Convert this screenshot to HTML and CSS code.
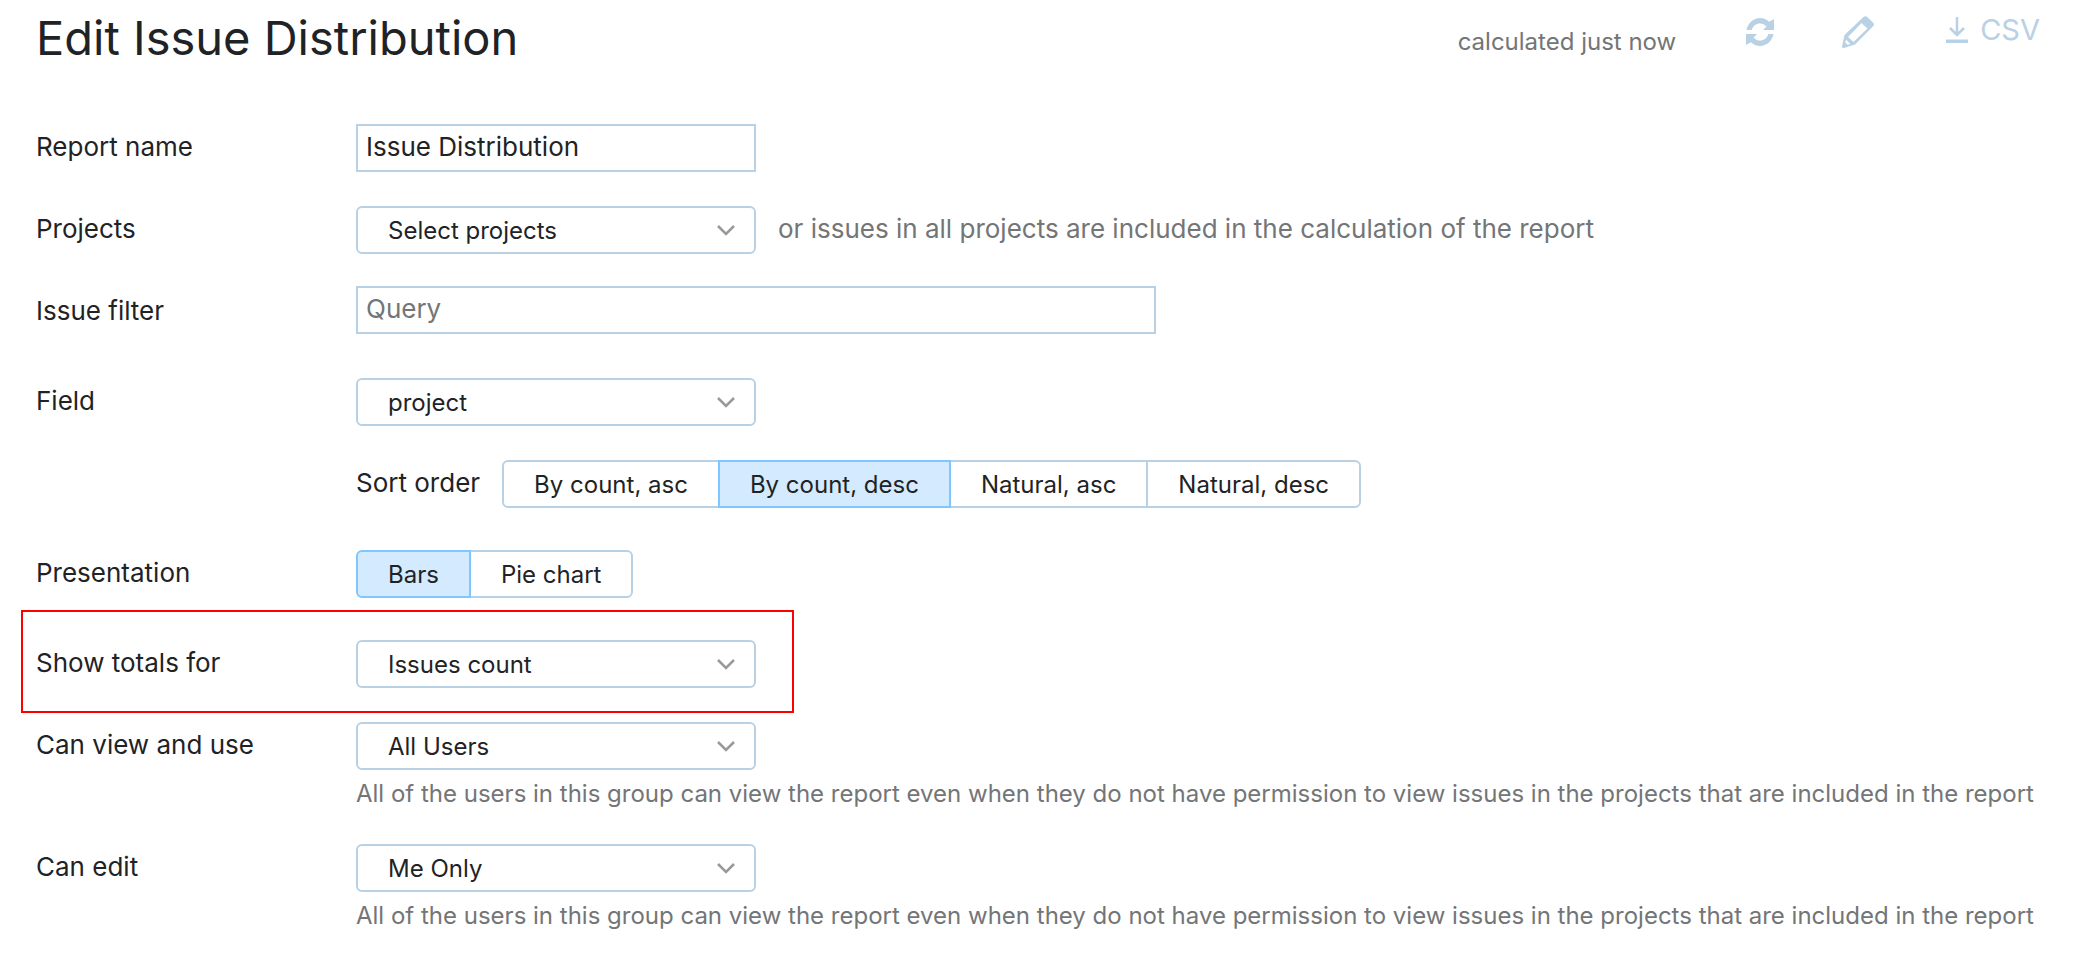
FILE: index.html
```html
<!DOCTYPE html>
<html lang="en">
<head>
<meta charset="utf-8">
<title>Edit Issue Distribution</title>
<link rel="stylesheet" href="styles.css">
</head>
<body>
<main class="report">
  <header class="report-header">
    <h1 class="report-title">Edit Issue Distribution</h1>
    <div class="toolbar">
      <span class="status">calculated just now</span>
      <button class="tool" type="button" aria-label="Refresh">
        <svg class="icon icon-refresh" viewBox="0 0 28 28" aria-hidden="true"><path fill="currentColor" d="M0.500 12C1.800 5 7.300 0 14 0c3.600 0 6.800 1.400 9.200 3.800L28 1v11H17l3.500-3.500C18.700 6.500 16.500 5.400 14 5.400c-4 0-7.200 2.700-8.300 6.600zM27.500 16C26.200 23 20.700 28 14 28c-3.600 0-6.800-1.400-9.200-3.800L0 27V16h11l-3.500 3.500c1.800 2 4 3.100 6.500 3.100 4 0 7.200-2.700 8.300-6.600z"/></svg>
      </button>
      <button class="tool" type="button" aria-label="Edit">
        <svg class="icon icon-pencil" viewBox="0 0 32 32" aria-hidden="true"><path fill="currentColor" fill-rule="evenodd" d="M21.500 1q1.500-1.500 3.200-0.400l6.300 6q1.600 1.600 0.400 3.400L13 28.500 2 32q-2 0.300-2-1.500L2.500 19zM19.500 7L6 21l5.500 5L25.500 12.500zM4 23.500l-0.800 3 2.500 2.300 2.800-0.900z"/></svg>
      </button>
      <button class="tool tool-csv" type="button">
        <svg class="icon icon-download" viewBox="0 0 22 26" aria-hidden="true"><path fill="none" stroke="currentColor" stroke-width="2.500" d="M11 0v17M4 11l7 7 7-7"/><path fill="currentColor" d="M0 22.500h22V26H0z"/></svg>
        CSV
      </button>
    </div>
  </header>

  <form class="form">
    <div class="row">
      <label class="label" for="name">Report name</label>
      <div class="controls"><input class="input" id="name" type="text" value="Issue Distribution"></div>
    </div>
    <div class="row">
      <label class="label" for="projects">Projects</label>
      <div class="controls">
        <span class="select"><select id="projects"><option>Select projects</option></select><svg class="chevron" viewBox="0 0 18 11" aria-hidden="true"><path d="M1 1l8 8 8-8"/></svg></span>
        <span class="note">or issues in all projects are included in the calculation of the report</span>
      </div>
    </div>
    <div class="row row-tight">
      <label class="label" for="filter">Issue filter</label>
      <div class="controls"><input class="input input-wide" id="filter" type="text" placeholder="Query"></div>
    </div>
    <div class="row row-section">
      <label class="label" for="field">Field</label>
      <div class="controls">
        <span class="select"><select id="field"><option>project</option></select><svg class="chevron" viewBox="0 0 18 11" aria-hidden="true"><path d="M1 1l8 8 8-8"/></svg></span>
      </div>
    </div>
    <div class="row row-indent">
      <div class="controls">
        <span class="label" id="sort">Sort order</span>
        <div class="group" role="group" aria-labelledby="sort">
          <button class="option" type="button" aria-pressed="false">By count, asc</button>
          <button class="option" type="button" aria-pressed="true">By count, desc</button>
          <button class="option" type="button" aria-pressed="false">Natural, asc</button>
          <button class="option" type="button" aria-pressed="false">Natural, desc</button>
        </div>
      </div>
    </div>
    <div class="row row-section">
      <span class="label" id="presentation">Presentation</span>
      <div class="controls">
        <div class="group" role="group" aria-labelledby="presentation">
          <button class="option" type="button" aria-pressed="true">Bars</button>
          <button class="option" type="button" aria-pressed="false">Pie chart</button>
        </div>
      </div>
    </div>
    <div class="row row-section row-marked">
      <label class="label" for="totals">Show totals for</label>
      <div class="controls">
        <span class="select"><select id="totals"><option>Issues count</option></select><svg class="chevron" viewBox="0 0 18 11" aria-hidden="true"><path d="M1 1l8 8 8-8"/></svg></span>
      </div>
    </div>
    <div class="row">
      <label class="label" for="view">Can view and use</label>
      <div class="controls">
        <span class="select"><select id="view"><option>All Users</option></select><svg class="chevron" viewBox="0 0 18 11" aria-hidden="true"><path d="M1 1l8 8 8-8"/></svg></span>
        <p class="hint">All of the users in this group can view the report even when they do not have permission to view issues in the projects that are included in the report</p>
      </div>
    </div>
    <div class="row">
      <label class="label" for="edit">Can edit</label>
      <div class="controls">
        <span class="select"><select id="edit"><option>Me Only</option></select><svg class="chevron" viewBox="0 0 18 11" aria-hidden="true"><path d="M1 1l8 8 8-8"/></svg></span>
        <p class="hint">All of the users in this group can view the report even when they do not have permission to view issues in the projects that are included in the report</p>
      </div>
    </div>
  </form>
</main>
</body>
</html>
```

FILE: styles.css
```css
*, *::after { box-sizing: border-box; }

body {
  margin: 0;
  background: #fff;
  color: #1f2326;
  font: 26px/46px Inter, "Liberation Sans", sans-serif;
}

button, input, select { font: inherit; color: inherit; margin: 0; }

.report { padding: 6px 36px 0; }

.report-header {
  display: flex;
  justify-content: space-between;
  align-items: flex-start;
}

.report-title { margin: 0; font-size: 47px; line-height: 64px; font-weight: 400; }

.toolbar { display: flex; align-items: flex-start; }

.status { padding: 13px 58px 0 0; font-size: 24px; color: #737577; }

.tool {
  display: flex;
  align-items: center;
  height: 52px;
  padding: 0 12px;
  border: 0;
  background: none;
  color: #b8d1e5;
  font-size: 29px;
}

.icon { display: block; flex: none; }
.icon-refresh { width: 28px; height: 28px; }
.icon-pencil { width: 32px; height: 32px; }
.icon-download { width: 22px; height: 26px; }
.tool + .tool { margin-left: 44px; }
.tool-csv { gap: 12px; height: 48px; padding: 0 8px 0 16px; }

.form { padding-top: 54px; }

.row { display: grid; grid-template-columns: 320px 1fr; align-items: start; }
.row + .row { margin-top: 34px; }
.row + .row-tight { margin-top: 32px; }
.row + .row-section { margin-top: 42px; }
.row-tight + .row-section { margin-top: 44px; }
.row-tight .label { padding-top: 2px; }
.row-indent > .controls { grid-column: 2; }

.controls { display: flex; flex-wrap: wrap; column-gap: 22px; }

.input {
  width: 400px;
  height: 48px;
  padding: 0 8px 4px;
  border: 2px solid #b8d1e5;
  border-radius: 0;
  background: #fff;
}
.input-wide { width: 800px; }
.input::placeholder { color: #737577; opacity: 1; }

.select { position: relative; width: 400px; }
.select select {
  display: block;
  width: 100%;
  height: 48px;
  padding: 0 60px 4px 30px;
  border: 2px solid #b8d1e5;
  border-radius: 6px;
  background: #fff;
  appearance: none;
  font-size: 24px;
}
.chevron {
  position: absolute;
  top: 19px;
  right: 21px;
  width: 18px;
  height: 11px;
  fill: none;
  stroke: #999;
  stroke-width: 2.5;
  pointer-events: none;
}

.note { color: #737577; }
.hint {
  flex: 0 0 100%;
  margin: 0;
  padding-top: 8px;
  font-size: 24px;
  line-height: 32px;
  color: #737577;
}

.group { display: flex; }
.option {
  height: 48px;
  padding: 0 30px 4px;
  border: 2px solid #b8d1e5;
  background: #fff;
  font-size: 24px;
}
.option + .option { margin-left: -2px; }
.option:first-child { border-radius: 6px 0 0 6px; }
.option:last-child { border-radius: 0 6px 6px 0; }
.option[aria-pressed="true"] { z-index: 1; border-color: #80c6ff; background: #d4ebff; }

.row-marked { position: relative; }
.row-marked::after {
  content: "";
  position: absolute;
  top: -30px;
  bottom: -25px;
  left: -15px;
  width: 773px;
  border: 2px solid #f00;
  pointer-events: none;
}
```
